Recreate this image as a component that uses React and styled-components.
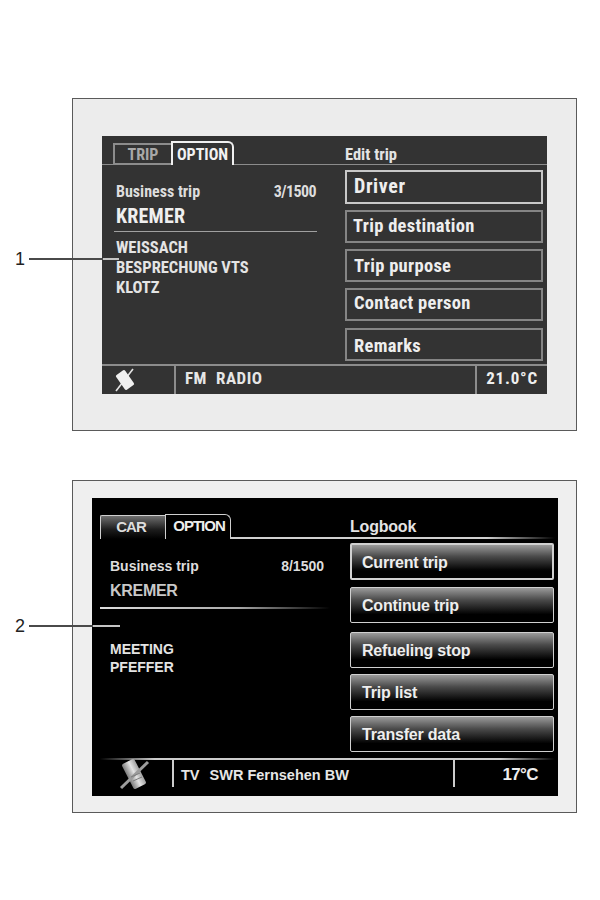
import React from 'react';
import styled, { createGlobalStyle, css } from 'styled-components';

const GlobalStyle = createGlobalStyle`
  html, body { margin: 0; padding: 0; background: #fff; }
  body { width: 600px; height: 900px; overflow: hidden; font-family: 'Liberation Sans', Arial, sans-serif; }
`;

const NARROW = `'Roboto Condensed', Roboto, sans-serif`;
const REGULAR = `'Liberation Sans', Arial, sans-serif`;

const Page = styled.div`
  position: relative;
  width: 600px;
  height: 900px;
  padding: 98px 0 0 72px;
  box-sizing: border-box;
  display: flex;
  flex-direction: column;
  gap: 49px;
`;

const Frame = styled.div`
  box-sizing: border-box;
  width: 505px;
  height: 333px;
  border: 1px solid #5a5a5a;
  background: ${(p) => (p.$modern ? '#efefef' : '#ececec')};
  display: flex;
  padding: ${(p) => (p.$modern ? '17px 18px 16px 19px' : '37px 29px 36px 29px')};
`;

const Screen = styled.div`
  flex: 1;
  display: flex;
  flex-direction: column;
  background: ${(p) => (p.$modern ? '#000' : '#333')};
  color: #e8e8e8;
  font-family: ${(p) => (p.$modern ? REGULAR : NARROW)};
  font-weight: 700;
`;

const Header = styled.div`
  display: flex;
  align-items: flex-end;
  height: ${(p) => (p.$modern ? '41px' : '29px')};
  margin: ${(p) => (p.$modern ? '0 3px 0 8px' : '0')};
  padding-left: ${(p) => (p.$modern ? '0' : '11px')};
  box-sizing: border-box;
  ${(p) =>
    p.$modern
      ? css`
          background: linear-gradient(to right, #d0d0d0 0, #d0d0d0 85%, #000 100%) bottom / 100% 2px no-repeat;
        `
      : css`
          border-bottom: 1px solid #8c8c8c;
        `}
`;

const Tabs = styled.div`
  display: flex;
  align-items: flex-end;
  width: ${(p) => (p.$modern ? '250px' : '232px')};
  margin-bottom: ${(p) => (p.$modern ? '0' : '-1px')};
`;

const Tab = styled.div`
  box-sizing: border-box;
  display: flex;
  align-items: center;
  justify-content: center;
  font-size: ${(p) => (p.$modern ? '15px' : '16px')};
  letter-spacing: ${(p) => (p.$modern ? '-1px' : '0')};
  ${(p) =>
    p.$modern
      ? css`
          width: ${p.$w}px;
          height: ${p.$active ? 25 : 24}px;
          padding: ${p.$active ? '0 0 3px 2px' : '0 4px 3px 0'};
          border: 1px solid #cfcfcf;
          border-bottom: 0;
          border-right: ${p.$active ? '1px solid #cfcfcf' : '0'};
          border-radius: ${p.$active ? '0 6px 0 0' : '2px 0 0 0'};
          background: ${p.$active
            ? '#000'
            : 'linear-gradient(to bottom, #6e6e6e 0, #1c1c1c 60%, #000 100%)'};
          color: ${p.$active ? '#eee' : '#ddd'};
        `
      : css`
          width: ${p.$w}px;
          height: ${p.$active ? 24 : 22}px;
          border: ${p.$active ? '2px solid #f0f0f0' : '2px solid #8c8c8c'};
          border-bottom: ${p.$active ? '0' : '2px solid #8c8c8c'};
          border-right: ${p.$active ? '2px solid #f0f0f0' : '0'};
          border-top-right-radius: ${p.$active ? '6px' : '0'};
          background: #333;
          color: ${p.$active ? '#f2f2f2' : '#a8a8a8'};
        `}
`;

const Title = styled.div`
  font-size: ${(p) => (p.$modern ? '16px' : '16.5px')};
  line-height: 20px;
  padding-bottom: ${(p) => (p.$modern ? '2px' : '0')};
  margin-bottom: ${(p) => (p.$modern ? '0' : '-1px')};
  color: #e4e4e4;
  letter-spacing: ${(p) => (p.$modern ? '-0.2px' : '0')};
`;

const Body = styled.div`
  flex: 1;
  display: flex;
  min-height: 0;
`;

const Info = styled.div`
  box-sizing: border-box;
  width: ${(p) => (p.$modern ? '258px' : '243px')};
  padding: ${(p) => (p.$modern ? '16px 0 0 8px' : '16px 0 0 12px')};
  display: flex;
  flex-direction: column;
`;

const TripRow = styled.div`
  display: flex;
  justify-content: space-between;
  width: ${(p) => (p.$modern ? '214px' : '202px')};
  padding-left: ${(p) => (p.$modern ? '10px' : '2px')};
  box-sizing: ${(p) => (p.$modern ? 'content-box' : 'border-box')};
  font-size: ${(p) => (p.$modern ? '14px' : '16px')};
  line-height: 22px;
  color: #ddd;
`;

const Count = styled.span`
  letter-spacing: ${(p) => (p.$modern ? '0' : '-0.6px')};
`;

const Driver = styled.div`
  padding-left: ${(p) => (p.$modern ? '10px' : '2px')};
  margin-top: ${(p) => (p.$modern ? '2px' : '1px')};
  font-size: ${(p) => (p.$modern ? '16px' : '20px')};
  line-height: 24px;
  color: ${(p) => (p.$modern ? '#c8c8c8' : '#efefef')};
  letter-spacing: ${(p) => (p.$modern ? '-0.3px' : '0.2px')};
`;

const Rule = styled.div`
  height: ${(p) => (p.$modern ? '2px' : '1px')};
  width: ${(p) => (p.$modern ? '230px' : '203px')};
  margin-top: ${(p) => (p.$modern ? '4px' : '3px')};
  background: ${(p) =>
    p.$modern ? 'linear-gradient(to right, #ddd 0, #aaa 60%, #000 100%)' : '#a0a0a0'};
`;

const Notes = styled.div`
  padding-left: ${(p) => (p.$modern ? '10px' : '2px')};
  margin-top: ${(p) => (p.$modern ? '31px' : '6px')};
  font-size: ${(p) => (p.$modern ? '14px' : '16.5px')};
  line-height: ${(p) => (p.$modern ? '18px' : '20px')};
  color: #e4e4e4;
`;

const Menu = styled.div`
  flex: 1;
  display: flex;
  flex-direction: column;
  padding-right: 4px;
  padding-top: ${(p) => (p.$modern ? '4px' : '5px')};
`;

const MenuButton = styled.div`
  box-sizing: border-box;
  height: ${(p) => p.$h}px;
  margin-bottom: ${(p) => p.$gap}px;
  display: flex;
  align-items: center;
  color: #eee;
  ${(p) =>
    p.$modern
      ? css`
          padding: 2px 0 0 ${p.$focus ? 10 : 11}px;
          font-size: 16px;
          letter-spacing: -0.2px;
          border-radius: 2px;
          border: ${p.$focus ? '2px solid #d0d0d0' : '1px solid #d0d0d0'};
          background: linear-gradient(to bottom, #9a9a9a 0, #4a4a4a 35%, #000 78%);
        `
      : css`
          padding: ${p.$pad || '0 0 2px 7px'};
          font-size: ${p.$focus ? 20 : 18.5}px;
          letter-spacing: ${p.$focus ? 0.6 : 0.3}px;
          border: ${p.$focus ? '2px solid #c8c8c8' : '2px solid #858585'};
        `}
`;

const Footer = styled.div`
  box-sizing: border-box;
  height: ${(p) => (p.$modern ? '38px' : '30px')};
  margin: ${(p) => (p.$modern ? '0 3px 0 8px' : '0')};
  display: flex;
  align-items: ${(p) => (p.$modern ? 'flex-start' : 'stretch')};
  ${(p) =>
    p.$modern
      ? css`
          background: linear-gradient(to right, #000 0, #ccc 12%, #ccc 88%, #000 100%) top / 100% 2px no-repeat;
          padding-top: 2px;
        `
      : css`
          border-top: 2px solid #8c8c8c;
        `}
`;

const IconCell = styled.div`
  width: 72px;
  height: ${(p) => (p.$modern ? '27px' : 'auto')};
  display: flex;
  align-items: center;
  justify-content: center;
  padding-right: ${(p) => (p.$modern ? '4px' : '26px')};
  box-sizing: border-box;
`;

const Source = styled.div`
  flex: 1;
  height: ${(p) => (p.$modern ? '27px' : 'auto')};
  padding: ${(p) => (p.$modern ? '2px 0 0 7px' : '0 0 5px 9px')};
  box-sizing: border-box;
  display: flex;
  align-items: center;
  gap: ${(p) => (p.$modern ? '10px' : '9px')};
  border-left: ${(p) => (p.$modern ? '2px solid #ccc' : '2px solid #8c8c8c')};
  font-size: ${(p) => (p.$modern ? '14.5px' : '17px')};
  letter-spacing: ${(p) => (p.$modern ? '0' : '0.5px')};
  color: #e6e6e6;
`;

const Temp = styled.div`
  box-sizing: border-box;
  width: ${(p) => (p.$modern ? '102px' : '72px')};
  height: ${(p) => (p.$modern ? '27px' : 'auto')};
  padding: ${(p) => (p.$modern ? '3px 17px 0 0' : '0 9px 5px 0')};
  display: flex;
  align-items: center;
  justify-content: flex-end;
  border-left: ${(p) => (p.$modern ? '2px solid #ccc' : '2px solid #8c8c8c')};
  font-size: 17px;
  letter-spacing: ${(p) => (p.$modern ? '-0.6px' : '0.8px')};
  color: #eee;
`;

const Callout = styled.div`
  position: absolute;
  left: 15px;
  top: ${(p) => p.$top}px;
  height: 20px;
  display: flex;
  align-items: center;
  gap: 4px;
  color: #222;
  font-family: ${REGULAR};
  font-size: 18px;
`;

const Leader = styled.div`
  width: ${(p) => p.$w}px;
  height: 2px;
  background: linear-gradient(to right, #4a4a4a 0, #4a4a4a ${(p) => p.$split}px, #c4c4c4 ${(p) => p.$split}px);
`;

function PhoneIcon({ modern }) {
  if (modern) {
    return (
      <svg width="34" height="34" viewBox="0 0 34 34" aria-hidden="true">
        <defs>
          <linearGradient id="phoneFill" x1="0" y1="0" x2="1" y2="0">
            <stop offset="0" stopColor="#7a7a7a" />
            <stop offset="0.55" stopColor="#e4e4e4" />
            <stop offset="1" stopColor="#a0a0a0" />
          </linearGradient>
        </defs>
        <rect x="10" y="3" width="14" height="28" rx="2" transform="rotate(-27 17 17)" fill="url(#phoneFill)" />
        <path d="M31 5 L4 31" stroke="#9c9c9c" strokeWidth="3" />
        <path d="M14 20 l9 -4 M16 24 l9 -4" stroke="#7c7c7c" strokeWidth="1" />
      </svg>
    );
  }
  return (
    <svg width="22" height="24" viewBox="0 0 22 24" aria-hidden="true">
      <path d="M19 1 L2 23" stroke="#e4e4e4" strokeWidth="1.6" />
      <rect x="5.5" y="3" width="11" height="18" rx="1.5" transform="rotate(-35 11 12)" fill="#f0f0f0" />
    </svg>
  );
}

function Display({ modern, tabs, title, trip, driver, notes, buttons, source, temp }) {
  return (
    <Frame $modern={modern}>
      <Screen $modern={modern}>
        <Header $modern={modern}>
          <Tabs $modern={modern}>
            {tabs.map((t) => (
              <Tab key={t.label} $modern={modern} $active={t.active} $w={t.w}>
                {t.label}
              </Tab>
            ))}
          </Tabs>
          <Title $modern={modern}>{title}</Title>
        </Header>
        <Body>
          <Info $modern={modern}>
            <TripRow $modern={modern}>
              <span>Business trip</span>
              <Count $modern={modern}>{trip}</Count>
            </TripRow>
            <Driver $modern={modern}>{driver}</Driver>
            <Rule $modern={modern} />
            <Notes $modern={modern}>
              {notes.map((n) => (
                <div key={n}>{n}</div>
              ))}
            </Notes>
          </Info>
          <Menu $modern={modern}>
            {buttons.map((b, i) => (
              <MenuButton key={b.label} $modern={modern} $focus={i === 0} $h={b.h} $gap={b.gap} $pad={b.pad}>
                {b.label}
              </MenuButton>
            ))}
          </Menu>
        </Body>
        <Footer $modern={modern}>
          <IconCell $modern={modern}>
            <PhoneIcon modern={modern} />
          </IconCell>
          <Source $modern={modern}>
            {source.map((s) => (
              <span key={s}>{s}</span>
            ))}
          </Source>
          <Temp $modern={modern}>{temp}</Temp>
        </Footer>
      </Screen>
    </Frame>
  );
}

export default function App() {
  return (
    <Page>
      <GlobalStyle />
      <Display
        tabs={[
          { label: 'TRIP', w: 58 },
          { label: 'OPTION', w: 63, active: true },
        ]}
        title="Edit trip"
        trip="3/1500"
        driver="KREMER"
        notes={['WEISSACH', 'BESPRECHUNG VTS', 'KLOTZ']}
        buttons={[
          { label: 'Driver', h: 34, gap: 6 },
          { label: 'Trip destination', h: 33, gap: 6, pad: '0 0 2px 6px' },
          { label: 'Trip purpose', h: 33, gap: 6, pad: '0 0 0 7px' },
          { label: 'Contact person', h: 33, gap: 7, pad: '0 0 3px 7px' },
          { label: 'Remarks', h: 33, gap: 0, pad: '2px 0 0 7px' },
        ]}
        source={['FM', 'RADIO']}
        temp="21.0°C"
      />
      <Display
        modern
        tabs={[
          { label: 'CAR', w: 65 },
          { label: 'OPTION', w: 66, active: true },
        ]}
        title="Logbook"
        trip="8/1500"
        driver="KREMER"
        notes={['MEETING', 'PFEFFER']}
        buttons={[
          { label: 'Current trip', h: 37, gap: 7 },
          { label: 'Continue trip', h: 36, gap: 9 },
          { label: 'Refueling stop', h: 36, gap: 6 },
          { label: 'Trip list', h: 36, gap: 6 },
          { label: 'Transfer data', h: 36, gap: 0 },
        ]}
        source={['TV', 'SWR Fernsehen BW']}
        temp="17°C"
      />
      <Callout $top={249}>
        1
        <Leader $w={90} $split={74} />
      </Callout>
      <Callout $top={616}>
        2
        <Leader $w={91} $split={64} />
      </Callout>
    </Page>
  );
}
